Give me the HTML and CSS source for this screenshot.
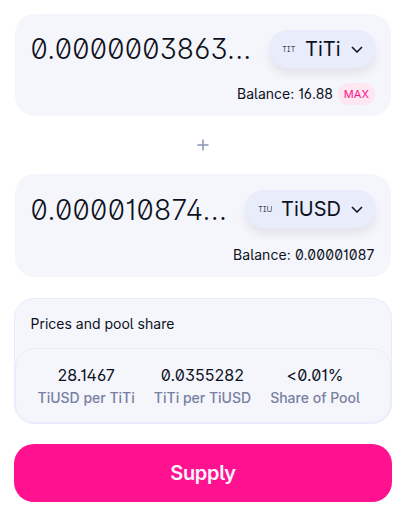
FILE: index.html
```html
<!DOCTYPE html>
<html lang="en">
<head>
<meta charset="utf-8">
<title>Add liquidity</title>
<link rel="stylesheet" href="styles.css">
</head>
<body>
<main class="form">
  <section class="card">
    <div class="row">
      <span class="amount">0.0000003863...</span>
      <button class="token token-first"><span class="logo">TIT</span><span class="symbol">TiTi</span><svg class="chevron" width="12" height="7" viewBox="0 0 12 7"><path d="M.97 1L6 6l5-5"/></svg></button>
    </div>
    <div class="balance"><span class="balance-first">Balance: 16.88</span><button class="max">MAX</button></div>
  </section>
  <div class="plus"><svg width="12" height="12" viewBox="0 0 12 12"><path d="M6 .5v11M.5 6h11"/></svg></div>
  <section class="card card-second">
    <div class="row">
      <span class="amount amount-second">0.000010874...</span>
      <button class="token token-second"><span class="logo">TIU</span><span class="symbol">TiUSD</span><svg class="chevron" width="12" height="7" viewBox="0 0 12 7"><path d="M.97 1L6 6l5-5"/></svg></button>
    </div>
    <div class="balance"><span class="balance-second">Balance: 0.00001087</span></div>
  </section>
  <section class="pool">
    <h2 class="pool-title">Prices and pool share</h2>
    <div class="stats">
      <div class="stat"><span class="value">28.1467</span><span class="label">TiUSD per TiTi</span></div>
      <div class="stat"><span class="value">0.0355282</span><span class="label">TiTi per TiUSD</span></div>
      <div class="stat"><span class="value">&lt;0.01%</span><span class="label">Share of Pool</span></div>
    </div>
  </section>
  <button class="supply">Supply</button>
</main>
</body>
</html>
```
FILE: styles.css
```css
* { box-sizing: border-box; }
body {
  margin: 0;
  background: #fff;
  color: #0d111c;
  font-family: Inter, sans-serif;
  font-feature-settings: "ss01", "ss02", "cv01", "cv03";
}
button { font: inherit; font-feature-settings: inherit; color: inherit; border: 0; margin: 0; padding: 0; }
.form { padding: 14px 15px 0 14px; }
.card {
  height: 102px;
  margin: 0 1px;
  padding: 16px 15px 0 16px;
  border-radius: 20px;
  background: #f5f6fc;
}
.card-second { height: 103px; }
.row { display: flex; justify-content: space-between; height: 38px; }
.amount { font-size: 28px; line-height: 38px; white-space: nowrap; font-weight: 300; letter-spacing: .2px; margin-left: -.5px; }
.amount-second { line-height: 40px; letter-spacing: .3px; }
.token {
  display: flex;
  align-items: center;
  height: 38px;
  padding: 0 13px 0 12px;
  border-radius: 19px;
  background: #e8ecfb;
  box-shadow: 0 6px 10px rgba(0, 0, 0, .075);
}
.token-first { width: 107px; }
.token-second { width: 131px; }
.logo { width: 24px; padding-left: 1px; font-size: 8px; text-align: left; white-space: nowrap; font-weight: 300; }
.symbol { font-size: 20px; white-space: nowrap; }
.chevron { margin-left: auto; }
.chevron path { fill: none; stroke: #0d111c; stroke-width: 1.5; }
.balance {
  display: flex;
  justify-content: flex-end;
  align-items: center;
  height: 22px;
  margin-top: 15px;
  font-size: 14px;
  white-space: nowrap;
}
.balance-first { margin-bottom: 1px; }
.balance-second { letter-spacing: .1px; margin-right: 1.5px; }
.max {
  width: 37px;
  height: 22px;
  margin: 0 1px 0 5px;
  border-radius: 11px;
  background: #ffe7f1;
  color: #fb118e;
  font-size: 11px;
  font-weight: 400;
  letter-spacing: .2px;
}
.plus { display: flex; justify-content: center; align-items: center; height: 58px; }
.plus path { stroke: #8992b5; stroke-width: 1.5; }
.pool {
  height: 126px;
  margin-top: 21px;
  border: 1px solid #e8ecfb;
  border-radius: 20px;
  background: #f5f6fc;
}
.pool-title { height: 49px; margin: 0; padding-left: 15.5px; font-size: 14px; font-weight: 400; line-height: 50px; }
.stats {
  display: flex;
  justify-content: space-between;
  height: 75px;
  padding: 16px 30px 0 21.5px;
  border: 1px solid #e8ecfb;
  border-radius: 20px;
}
.stat { display: flex; flex-direction: column; align-items: center; white-space: nowrap; }
.value { font-size: 16px; line-height: 20px; letter-spacing: .05px; }
.label { font-size: 14px; line-height: 26px; font-weight: 500; color: #7780a0; }
.supply {
  display: block;
  width: 100%;
  height: 58px;
  margin-top: 20px;
  border-radius: 20px;
  background: #ff118f;
  color: #f5f6fc;
  font-size: 20px;
  font-weight: 600;
  letter-spacing: -.3px;
}
```
